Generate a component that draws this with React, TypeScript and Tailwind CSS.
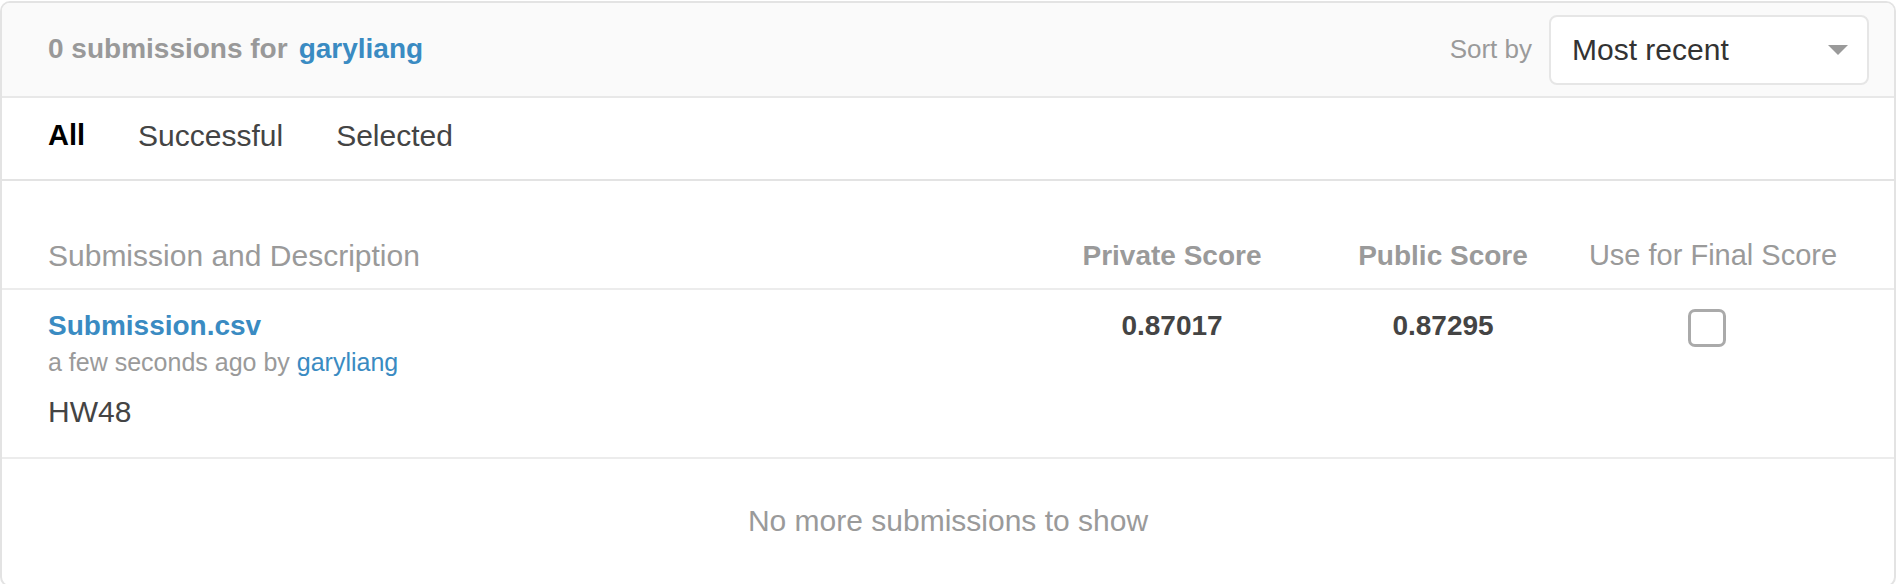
const font = { fontFamily: '"Liberation Sans", Arial, sans-serif' }

export default function App() {
  return (
    <div className="w-[1898px] h-[584px] bg-white overflow-hidden" style={font}>
      <div className="mt-[1px] w-[1896px] h-[586px] border-2 border-[#e3e3e3] rounded-[10px] overflow-hidden bg-white">
        {/* Header */}
        <div className="h-[95px] bg-[#fafafa] border-b-2 border-[#e8e8e8] flex items-center justify-between pl-[46px] pr-[25px]">
          <div className="flex items-center text-[28px] font-bold leading-none mt-[-1px]">
            <span className="text-[#999999]">0 submissions for</span>
            <span className="ml-[11px] text-[#3a8bc2]">garyliang</span>
          </div>
          <div className="flex items-center">
            <span className="text-[26px] text-[#9a9a9a] mr-[17px]">Sort by</span>
            <div className="w-[320px] h-[70px] bg-white border-2 border-[#e6e6e6] rounded-[8px] flex items-center justify-between pl-[21px] pr-[19px]">
              <span className="text-[30px] text-[#333333]">Most recent</span>
              <svg width="20" height="10" viewBox="0 0 20 10">
                <path d="M0 0 L20 0 L10 10 Z" fill="#9a9a9a" />
              </svg>
            </div>
          </div>
        </div>

        {/* Tabs */}
        <div className="h-[83px] pb-[6px] border-b-2 border-[#e3e3e3] flex items-center gap-[53px] pl-[46px] text-[30px]">
          <span className="font-bold text-black text-[29px]">All</span>
          <span className="text-[#444444]">Successful</span>
          <span className="text-[#444444]">Selected</span>
        </div>

        {/* Table */}
        <div className="pt-[42px]">
          <div className="h-[67px] border-b-2 border-[#ececec] grid grid-cols-[1fr_288px_254px_286px] items-center pl-[46px] pr-[38px] text-[#9a9a9a]">
            <span className="text-[30px]">Submission and Description</span>
            <span className="text-[28px] font-bold text-center">Private Score</span>
            <span className="text-[28px] font-bold text-center">Public Score</span>
            <span className="text-[29px] text-center">Use for Final Score</span>
          </div>

          <div className="h-[169px] border-b-2 border-[#ececec] grid grid-cols-[1fr_288px_254px_286px] items-start pt-[18px] pl-[46px] pr-[38px]">
            <div className="flex flex-col">
              <span className="text-[28px] font-bold text-[#3a8bc2] leading-[36px]">Submission.csv</span>
              <span className="mt-[2px] text-[25px] text-[#9a9a9a] leading-[32px]">
                a few seconds ago by <span className="text-[#3a8bc2]">garyliang</span>
              </span>
              <span className="mt-[16px] text-[30px] text-[#444444] leading-[36px]">HW48</span>
            </div>
            <span className="text-[28px] font-bold text-[#444444] leading-[36px] text-center">0.87017</span>
            <span className="text-[28px] font-bold text-[#444444] leading-[36px] text-center">0.87295</span>
            <div className="h-[36px] flex items-center justify-center">
              <div className="mt-[3px] ml-[-12px] w-[38px] h-[38px] border-[3px] border-[#aaaaaa] rounded-[7px] bg-white" />
            </div>
          </div>

          <div className="h-[123px] flex items-center justify-center">
            <span className="text-[30px] text-[#9a9a9a]">No more submissions to show</span>
          </div>
        </div>
      </div>
    </div>
  )
}
